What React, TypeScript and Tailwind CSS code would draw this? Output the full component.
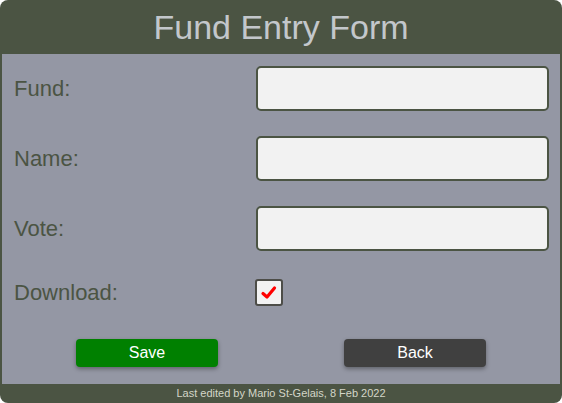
import React from "react";

function Row({ label, children, className = "" }: { label: string; children: React.ReactNode; className?: string }) {
  return (
    <div className={"flex items-center " + className}>
      <div className="w-[254px] shrink-0 pl-[12px] text-[22px] text-[#4b5443] leading-none">{label}</div>
      {children}
    </div>
  );
}

export default function App() {
  return (
    <div className="w-[562px] h-[403px] bg-[#4b5443] rounded-[8px] overflow-hidden flex flex-col" style={{ fontFamily: '"Liberation Sans", Arial, sans-serif' }}>
      <div className="h-[54px] flex items-center justify-center text-[34px] text-[#c3c7cb] leading-none">
        Fund Entry Form
      </div>
      <div className="h-[330px] mx-[2px] bg-[#9497a4] flex flex-col pt-[12px]">
        <Row label="Fund:">
          <div className="w-[293px] h-[45px] rounded-[5px] border-2 border-[#4b5443] bg-[#f2f2f2]" />
        </Row>
        <Row label="Name:" className="mt-[25px]">
          <div className="w-[293px] h-[45px] rounded-[5px] border-2 border-[#4b5443] bg-[#f2f2f2]" />
        </Row>
        <Row label="Vote:" className="mt-[25px]">
          <div className="w-[293px] h-[45px] rounded-[5px] border-2 border-[#4b5443] bg-[#f2f2f2]" />
        </Row>
        <Row label="Download:" className="mt-[19px] h-[45px]">
          <div className="ml-[-1px] w-[28px] h-[27px] rounded-[3px] border-2 border-[#4d4d48] bg-[#f2f2f2] flex items-center justify-center">
            <svg width="18" height="16" viewBox="0 0 18 16">
              <path d="M3 8.5 L7 12 L14.5 3" fill="none" stroke="#ff0000" strokeWidth="3.2" strokeLinecap="round" strokeLinejoin="round" />
            </svg>
          </div>
        </Row>
        <div className="flex mt-[24px] pl-[74px]">
          <button className="w-[142px] h-[28px] rounded-[4px] bg-[#008000] text-white text-[16px] shadow-[0_2px_4px_rgba(0,0,0,0.35)]">Save</button>
          <button className="ml-[126px] w-[142px] h-[28px] rounded-[4px] bg-[#404040] text-white text-[16px] shadow-[0_2px_4px_rgba(0,0,0,0.35)]">Back</button>
        </div>
      </div>
      <div className="h-[19px] flex items-center justify-center text-[11px] text-[#d4d6c8] leading-none">
        Last edited by Mario St-Gelais, 8 Feb 2022
      </div>
    </div>
  );
}
